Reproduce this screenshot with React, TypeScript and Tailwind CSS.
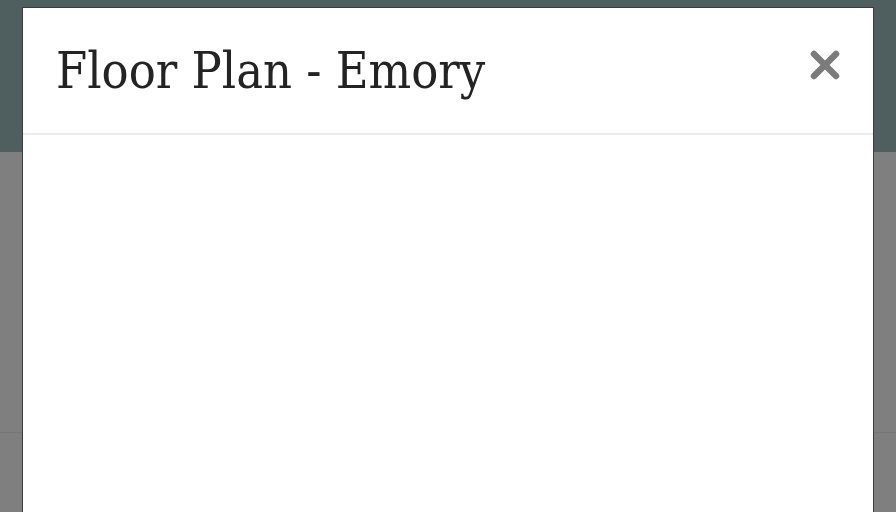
export default function App() {
  return (
    <div className="relative h-[512px] w-[896px] overflow-hidden bg-[#7f7f7f]">
      {/* page behind the overlay */}
      <div className="h-[152px] bg-[#4f5f60]" />
      <div className="mt-[280px] h-px bg-[#767676]" />

      {/* floor plan modal */}
      <div className="absolute left-[22px] top-[7px] h-[520px] w-[852px] border border-[#3a3a3a] bg-white">
        <div className="flex h-[127px] items-center justify-between border-b-2 border-[#ebebeb] pl-[33px] pr-[32px]">
          <h1
            className="pt-[2px] text-[50px] font-normal font-stretch-condensed text-[#232323]"
            style={{ fontFamily: '"DejaVu Serif Condensed", "DejaVu Serif", serif' }}
          >
            Floor Plan - Emory
          </h1>
          <button className="mb-[12px] text-[#7b7b7b]">
            <svg width="32" height="32" viewBox="0 0 32 32" fill="none">
              <path
                d="M5 5 L27 27 M27 5 L5 27"
                stroke="currentColor"
                strokeWidth="6.5"
                strokeLinecap="round"
              />
            </svg>
          </button>
        </div>
      </div>
    </div>
  );
}
